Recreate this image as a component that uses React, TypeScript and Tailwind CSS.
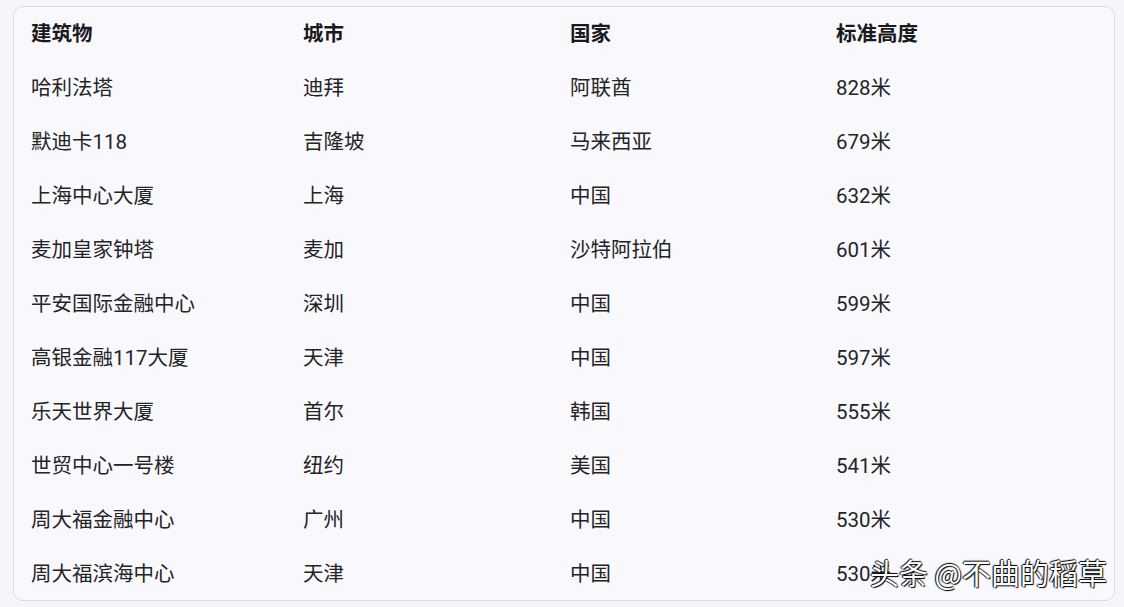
const rows = [
  ["哈利法塔", "迪拜", "阿联酋", "828米"],
  ["默迪卡118", "吉隆坡", "马来西亚", "679米"],
  ["上海中心大厦", "上海", "中国", "632米"],
  ["麦加皇家钟塔", "麦加", "沙特阿拉伯", "601米"],
  ["平安国际金融中心", "深圳", "中国", "599米"],
  ["高银金融117大厦", "天津", "中国", "597米"],
  ["乐天世界大厦", "首尔", "韩国", "555米"],
  ["世贸中心一号楼", "纽约", "美国", "541米"],
  ["周大福金融中心", "广州", "中国", "530米"],
  ["周大福滨海中心", "天津", "中国", "530米"],
];

export default function App() {
  return (
    <div
      className="relative w-[1124px] h-[607px] bg-[#f6f5f9] pt-[6px] pl-[13px] overflow-hidden"
      style={{ fontFamily: "Roboto, 'Noto Sans CJK SC', sans-serif" }}
    >
      <div className="w-[1102px] h-[595px] rounded-[10px] border border-[#dddce2] bg-[#f9f8fc] pl-[17px] text-[20.5px] text-[#242426]">
        <div className="grid grid-cols-[272px_267px_266px_1fr] h-[54px] items-center font-bold text-[#1a1a1c]">
          <div>建筑物</div>
          <div>城市</div>
          <div>国家</div>
          <div>标准高度</div>
        </div>
        {rows.map((r, i) => (
          <div key={i} className="grid grid-cols-[272px_267px_266px_1fr] h-[54px] items-center">
            {r.map((c, j) => (
              <div key={j}>{c}</div>
            ))}
          </div>
        ))}
      </div>
      <div
        className="absolute left-[870px] top-[553px] text-[29px] leading-[38px] text-white"
        style={{ fontFamily: "'Noto Sans CJK SC', sans-serif", textShadow: "1px 1px 1px #000, -1px 0 1px #000, 0 -1px 1px #000" }}
      >
        头条 @不曲的稻草
      </div>
    </div>
  );
}
